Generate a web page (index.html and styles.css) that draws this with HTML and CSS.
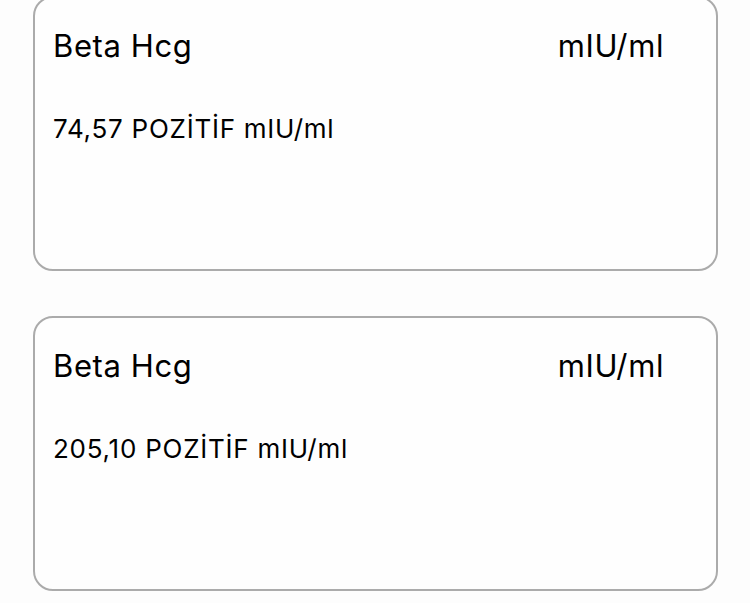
FILE: index.html
```html
<!DOCTYPE html>
<html lang="tr">
<head>
<meta charset="utf-8">
<link rel="stylesheet" href="styles.css">
</head>
<body>
<div class="list">
  <div class="card">
    <div class="card-head">
      <span class="title">Beta Hcg</span>
      <span class="unit">mIU/ml</span>
    </div>
    <div class="value">74,57 POZİTİF mIU/ml</div>
  </div>
  <div class="card">
    <div class="card-head">
      <span class="title">Beta Hcg</span>
      <span class="unit">mIU/ml</span>
    </div>
    <div class="value">205,10 POZİTİF mIU/ml</div>
  </div>
</div>
</body>
</html>
```

FILE: styles.css
```css
html, body {
  margin: 0;
  padding: 0;
  background: #fdfdfd;
}
body {
  font-family: Inter, "Liberation Sans", sans-serif;
  color: #000;
  overflow: hidden;
}
.list {
  margin-top: -4px;
  padding: 0 32px 0 33px;
  display: flex;
  flex-direction: column;
  gap: 45px;
}
.card {
  box-sizing: border-box;
  height: 275px;
  border: 2px solid #ababab;
  border-radius: 20px;
  background: #fefefe;
  padding: 30px 52px 0 18px;
}
.card-head {
  display: flex;
  justify-content: space-between;
  align-items: baseline;
  font-size: 31px;
  line-height: 36px;
  letter-spacing: 0.6px;
}
.value {
  margin-top: 50px;
  font-size: 26px;
  line-height: 30px;
  letter-spacing: 0.75px;
}
```
